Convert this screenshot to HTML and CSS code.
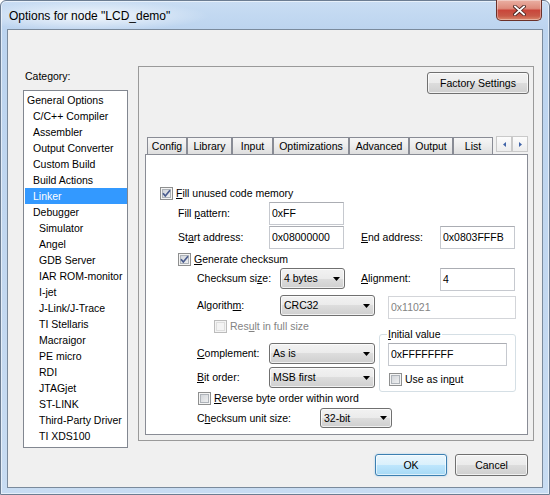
FILE: index.html
```html
<!DOCTYPE html>
<html lang="en">
<head>
<meta charset="utf-8">
<title>Options for node "LCD_demo"</title>
<link rel="stylesheet" href="styles.css">
</head>
<body>
<div class="window">
  <div class="titlebar">
    <span class="title">Options for node "LCD_demo"</span>
    <div class="close" aria-label="Close">
      <svg width="13" height="11" viewBox="0 0 13 11"><path d="M2 1.5 L11 9.5 M11 1.5 L2 9.5" stroke="#4b2420" stroke-width="3.6" stroke-linecap="square" fill="none"/><path d="M2 1.5 L11 9.5 M11 1.5 L2 9.5" stroke="#ffffff" stroke-width="1.8" stroke-linecap="square" fill="none"/></svg>
    </div>
  </div>
  <div class="client">
    <div class="main">
      <div class="category">
        <div class="cat-label">Category:</div>
        <ul class="cat-list">
          <li class="l0">General Options</li>
          <li class="l1">C/C++ Compiler</li>
          <li class="l1">Assembler</li>
          <li class="l1">Output Converter</li>
          <li class="l1">Custom Build</li>
          <li class="l1">Build Actions</li>
          <li class="l1 sel">Linker</li>
          <li class="l1">Debugger</li>
          <li class="l2">Simulator</li>
          <li class="l2">Angel</li>
          <li class="l2">GDB Server</li>
          <li class="l2">IAR ROM-monitor</li>
          <li class="l2">I-jet</li>
          <li class="l2">J-Link/J-Trace</li>
          <li class="l2">TI Stellaris</li>
          <li class="l2">Macraigor</li>
          <li class="l2">PE micro</li>
          <li class="l2">RDI</li>
          <li class="l2">JTAGjet</li>
          <li class="l2">ST-LINK</li>
          <li class="l2">Third-Party Driver</li>
          <li class="l2">TI XDS100</li>
        </ul>
      </div>
      <div class="panel">
        <div class="panel-top"><button class="btn factory">Factory Settings</button></div>
        <div class="tabctl">
          <div class="tabstrip">
            <span class="tab t-config">Config</span>
            <span class="tab t-library">Library</span>
            <span class="tab t-input">Input</span>
            <span class="tab t-opt">Optimizations</span>
            <span class="tab t-adv">Advanced</span>
            <span class="tab t-output">Output</span>
            <span class="tab t-list">List</span>
            <span class="scroll">
              <span class="arrow"><svg width="3" height="5" viewBox="0 0 3 5"><path d="M3 0V5L0 2.5z" fill="#4064a8"/></svg></span>
              <span class="arrow"><svg width="3" height="5" viewBox="0 0 3 5"><path d="M0 0V5L3 2.5z" fill="#4064a8"/></svg></span>
            </span>
          </div>
          <div class="tabbox">
            <label class="check-row r1">
              <span class="cb"><svg width="11" height="11" viewBox="0 0 11 11"><path d="M2 5.2 L4.3 8 L9 2.2" stroke="#4a5c8e" stroke-width="1.7" fill="none"/></svg></span>
              <span><u>F</u>ill unused code memory</span>
            </label>
            <div class="row r2 in32">
              <span class="lbl w91">Fill <u>p</u>attern:</span>
              <span class="edit w75">0xFF</span>
            </div>
            <div class="row r3 in32">
              <span class="lbl w91">St<u>a</u>rt address:</span>
              <span class="edit w75">0x08000000</span>
              <span class="lbl w79 ml17"><u>E</u>nd address:</span>
              <span class="edit w75">0x0803FFFB</span>
            </div>
            <label class="check-row r4 in32">
              <span class="cb"><svg width="11" height="11" viewBox="0 0 11 11"><path d="M2 5.2 L4.3 8 L9 2.2" stroke="#4a5c8e" stroke-width="1.7" fill="none"/></svg></span>
              <span><u>G</u>enerate checksum</span>
            </label>
            <div class="row r5 in51">
              <span class="lbl lh21 w83">Checksum si<u>z</u>e:</span>
              <span class="combo w65"><span>4 bytes</span><svg width="7" height="4" viewBox="0 0 7 4"><path d="M0 0H7L3.5 4z" fill="#000"/></svg></span>
              <span class="lbl lh21 w79 ml16"><u>A</u>lignment:</span>
              <span class="edit w75">4</span>
            </div>
            <div class="row r6 in51">
              <span class="lbl lh21 w83">Algorith<u>m</u>:</span>
              <span class="combo w95"><span>CRC32</span><svg width="7" height="4" viewBox="0 0 7 4"><path d="M0 0H7L3.5 4z" fill="#000"/></svg></span>
              <span class="edit disabled w128 ml13">0x11021</span>
            </div>
            <div class="mid">
              <div class="mid-left">
                <label class="check-row in68 disabled-text">
                  <span class="cb off"></span>
                  <span>Res<u>u</u>lt in full size</span>
                </label>
                <div class="row in51 mt9">
                  <span class="lbl lh21 w72"><u>C</u>omplement:</span>
                  <span class="combo w106"><span>As is</span><svg width="7" height="4" viewBox="0 0 7 4"><path d="M0 0H7L3.5 4z" fill="#000"/></svg></span>
                </div>
                <div class="row in51 mt3">
                  <span class="lbl lh21 w72"><u>B</u>it order:</span>
                  <span class="combo w106"><span>MSB first</span><svg width="7" height="4" viewBox="0 0 7 4"><path d="M0 0H7L3.5 4z" fill="#000"/></svg></span>
                </div>
              </div>
              <fieldset class="group">
                <legend><u>I</u>nitial value</legend>
                <span class="edit w119">0xFFFFFFFF</span>
                <label class="check-row use-input">
                  <span class="cb"></span>
                  <span>Use as in<u>p</u>ut</span>
                </label>
              </fieldset>
            </div>
            <label class="check-row in52">
              <span class="cb"></span>
              <span><u>R</u>everse byte order within word</span>
            </label>
            <div class="row in51 mt2">
              <span class="lbl lh20 w123">C<u>h</u>ecksum unit size:</span>
              <span class="combo small w72"><span>32-bit</span><svg width="7" height="4" viewBox="0 0 7 4"><path d="M0 0H7L3.5 4z" fill="#000"/></svg></span>
            </div>
          </div>
        </div>
      </div>
    </div>
    <div class="actions">
      <button class="btn ok">OK</button>
      <button class="btn cancel">Cancel</button>
    </div>
  </div>
</div>
</body>
</html>
```
FILE: styles.css
```css
* { box-sizing: border-box; }
html, body { margin: 0; padding: 0; }
body {
  width: 550px;
  height: 495px;
  overflow: hidden;
  background: #ffffff;
  font-family: "Liberation Sans", Arial, sans-serif;
  font-size: 10.5px;
  color: #000;
}
u { text-decoration: underline; text-underline-offset: 1px; }

.window {
  width: 550px;
  height: 495px;
  border: 1px solid #6c7d92;
  border-radius: 6px 6px 0 0;
  background: linear-gradient(180deg, #c9ddf3 0px, #bcd4ef 28px, #c3d8f0 300px, #c8dcf2 100%);
  box-shadow: inset 0 0 0 1px rgba(255,255,255,0.55);
  display: flex;
  flex-direction: column;
}

.titlebar {
  height: 28px;
  display: flex;
  align-items: flex-start;
  padding-left: 8px;
  background: radial-gradient(ellipse 120px 15px at 88px 15px, rgba(255,255,255,0.8), rgba(255,255,255,0));
}
.title {
  margin-top: 8px;
  font-size: 12px;
  line-height: 15px;
  white-space: nowrap;
}
.close {
  margin-left: auto;
  margin-right: 7px;
  margin-top: -1px;
  width: 46px;
  height: 21px;
  border: 1px solid #6b3129;
  border-top: none;
  border-radius: 0 0 5px 5px;
  background: linear-gradient(180deg, #eab0a3 0%, #de8b7c 42%, #c9463a 52%, #c85a48 80%, #dc8a6e 100%);
  box-shadow: inset 0 0 0 1px rgba(255,255,255,0.35);
  display: flex;
  align-items: center;
  justify-content: center;
}

.client {
  margin: 0 6px 6px;
  height: 459px;
  border: 1px solid #7a8a9c;
  background: #f0f0f0;
  display: flex;
  flex-direction: column;
}

.main {
  display: flex;
  margin-top: 36px;
  height: 382px;
}

.category {
  margin-left: 15px;
  width: 105px;
}
.cat-label {
  margin-top: 4px;
  padding-left: 2px;
  height: 13px;
  line-height: 13px;
}
.cat-list {
  list-style: none;
  margin: 7px 0 0;
  padding: 1px 0 0;
  height: 358px;
  border: 1px solid #828790;
  background: #fff;
}
.cat-list li {
  height: 16px;
  line-height: 16px;
  margin-left: 1px;
  white-space: nowrap;
}
.cat-list .l0 { padding-left: 2px; }
.cat-list .l1 { padding-left: 8px; }
.cat-list .l2 { padding-left: 14px; }
.cat-list .sel { background: #3399ff; color: #fff; }

.panel {
  margin-left: 10px;
  width: 396px;
  height: 375px;
  border: 1px solid #9a9a9a;
  display: flex;
  flex-direction: column;
}
.panel-top {
  display: flex;
  justify-content: flex-end;
  padding: 5px 4px 0 0;
}

.btn {
  height: 22px;
  padding: 0;
  border: 1px solid #707070;
  border-radius: 3px;
  background: linear-gradient(180deg, #f2f2f2 0%, #ebebeb 50%, #dddddd 50%, #cfcfcf 100%);
  box-shadow: inset 0 0 0 1px rgba(255,255,255,0.7);
  font-family: "Liberation Sans", Arial, sans-serif;
  font-size: 10.5px;
  color: #000;
  line-height: 20px;
  text-align: center;
}
.factory { width: 102px; }

.tabctl {
  margin: 42px 0 0 6px;
  width: 383px;
}
.tabstrip {
  display: flex;
  align-items: flex-end;
  height: 18px;
  padding-left: 2px;
}
.tab {
  height: 17px;
  border: 1px solid #898c95;
  border-bottom: none;
  background: linear-gradient(180deg, #f6f6f6 0%, #ececec 50%, #dedede 100%);
  text-align: center;
  line-height: 16px;
  white-space: nowrap;
}
.t-config { width: 40px; }
.t-library { width: 45px; }
.t-input { width: 41px; }
.t-opt { width: 76px; }
.t-adv { width: 60px; }
.t-output { width: 44px; }
.t-list { width: 40px; }
.scroll {
  margin-left: auto;
  align-self: flex-start;
  display: flex;
}
.arrow {
  width: 16px;
  height: 16px;
  border: 1px solid #c9c9c9;
  background: linear-gradient(180deg, #fcfcfc, #ededed);
  display: flex;
  align-items: center;
  justify-content: center;
}

.tabbox {
  height: 281px;
  border: 1px solid #898c95;
  background: #fff;
}

.row {
  display: flex;
  align-items: flex-start;
}
.check-row {
  display: flex;
  align-items: center;
  height: 15px;
  line-height: 15px;
  white-space: nowrap;
}
.cb {
  flex: none;
  width: 13px;
  height: 13px;
  margin-right: 3px;
  border: 1px solid #8e8f8f;
  background: linear-gradient(135deg, #cbcfd5 0%, #f6f6f6 100%);
  box-shadow: inset 0 0 0 1px #f4f4f4, inset 0 0 0 2px #aeb3b9;
  display: flex;
}
.cb svg { display: block; }
.cb.off {
  border-color: #bcbcbc;
  background: #f4f4f4;
  box-shadow: inset 0 0 0 1px #f4f4f4, inset 0 0 0 2px #dedede;
}
.disabled-text { color: #838383; }

.r1 { margin-top: 31px; padding-left: 14px; }
.r2 { margin-top: 1px; height: 23px; }
.r3 { margin-top: 1px; height: 23px; }
.r4 { margin-top: 3px; }
.r5 { margin-top: 1px; height: 23px; }
.r6 { margin-top: 4px; height: 24px; }
.mt2 { margin-top: 2px; }
.mt3 { margin-top: 3px; }
.mt9 { margin-top: 9px; }

.in32 { padding-left: 32px; }
.in51 { padding-left: 51px; }
.in52 { padding-left: 52px; }
.in68 { padding-left: 68px; }

.lbl {
  flex: none;
  line-height: 23px;
  white-space: nowrap;
}
.lh21 { line-height: 21px; }
.lh20 { line-height: 20px; }
.w72 { width: 72px; }
.w75 { width: 75px; }
.w79 { width: 79px; }
.w83 { width: 83px; }
.w91 { width: 91px; }
.w65 { width: 65px; }
.w95 { width: 95px; }
.w106 { width: 106px; }
.w119 { width: 119px; }
.w123 { width: 123px; }
.w128 { width: 128px; }
.ml13 { margin-left: 13px; }
.ml16 { margin-left: 16px; }
.ml17 { margin-left: 17px; }

.edit {
  flex: none;
  display: block;
  height: 23px;
  padding-left: 2px;
  line-height: 21px;
  background: #fff;
  border: 1px solid #c6c9cf;
  border-top-color: #abadb3;
  white-space: nowrap;
}
.edit.disabled {
  margin-top: 1px;
  color: #838383;
  border-color: #d3d5d9;
}

.combo {
  flex: none;
  height: 21px;
  padding: 0 4px 0 3px;
  border: 1px solid #707070;
  border-radius: 3px;
  background: linear-gradient(180deg, #f2f2f2 0%, #ebebeb 50%, #dddddd 50%, #cfcfcf 100%);
  box-shadow: inset 0 0 0 1px rgba(255,255,255,0.7);
  display: flex;
  align-items: center;
  justify-content: space-between;
  line-height: 19px;
  white-space: nowrap;
}
.combo.small { height: 20px; line-height: 18px; }

.mid {
  display: flex;
  height: 72px;
}
.mid-left { width: 233px; }
.group {
  flex: none;
  margin: 9px 0 0;
  width: 137px;
  height: 64px;
  min-width: 0;
  padding: 2px 8px 0 8px;
  border: 1px solid #d5dfe5;
  border-radius: 3px;
}
.group legend {
  padding: 0 1px;
  margin-left: -1px;
  line-height: 13px;
  font-size: 10.5px;
}
.use-input {
  margin-top: 6px;
  margin-left: 1px;
}

.actions {
  display: flex;
  justify-content: flex-end;
  gap: 8px;
  margin-top: 6px;
  padding-right: 14px;
}
.ok {
  width: 72px;
  border-color: #3c7fb1;
  background: linear-gradient(180deg, #eaf6fd 0%, #d9f0fc 50%, #bee6fd 50%, #a7d9f5 100%);
  box-shadow: inset 0 0 0 1px rgba(255,255,255,0.6), 0 0 2px rgba(80,170,230,0.5);
}
.cancel { width: 73px; }
```
